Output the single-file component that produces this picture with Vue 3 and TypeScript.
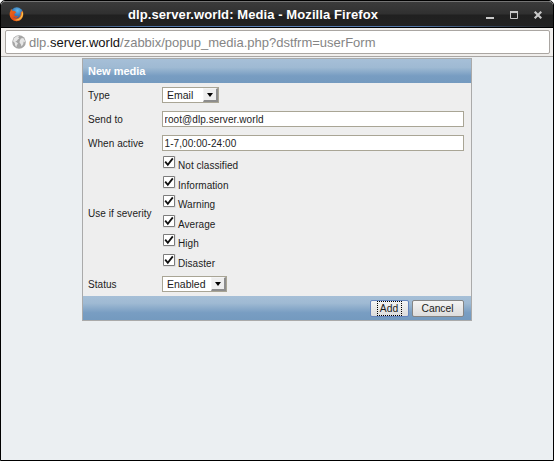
<script setup lang="ts">
import { ref } from 'vue'

const sendTo = ref('root@dlp.server.world')
const whenActive = ref('1-7,00:00-24:00')
const severities = ref([
  { name: 'Not classified', on: true },
  { name: 'Information', on: true },
  { name: 'Warning', on: true },
  { name: 'Average', on: true },
  { name: 'High', on: true },
  { name: 'Disaster', on: true },
])
</script>

<template>
  <div class="window">
    <header class="titlebar">
      <svg class="firefox" width="15" height="15" viewBox="0 0 16 16">
        <defs>
          <linearGradient id="fox" x1="0" y1="0" x2="1" y2="1">
            <stop offset="0" stop-color="#e8701c" />
            <stop offset=".55" stop-color="#e24a12" />
            <stop offset="1" stop-color="#f6a53b" />
          </linearGradient>
          <radialGradient id="globe" cx=".55" cy=".25" r=".7">
            <stop offset="0" stop-color="#62b7e8" />
            <stop offset="1" stop-color="#174a91" />
          </radialGradient>
        </defs>
        <circle cx="8.3" cy="7.2" r="6.8" fill="url(#globe)" />
        <path d="M2.2 1.8 3.6 4 6 4.2 7.8 5.6 5.9 7.1 5.6 8.2C6.2 9.8 8 10.5 10 9.6 8.6 12 5.6 12 4.1 10.2 5.5 13 10.5 13.1 12 9.7 13 7.4 12.6 5.8 12.4 4.8L13.4 5.6 14.4 3.7C16 7 15.4 10.3 13.3 12.8 10.5 16 5.5 15.7 2.8 13 .3 10.5.1 6.5 1.6 3.9Z" fill="url(#fox)" />
        <path d="M14.4 4.2C15.6 7.4 14.7 10 12.9 12 11 14 8 14.6 5.6 13.7 9 14 12.4 12.4 13.3 9.4 13.8 7.6 13.7 6 13.3 4.8L14.2 6Z" fill="#f9d04c" />
      </svg>
      <span class="title">dlp.server.world: Media - Mozilla Firefox</span>
      <svg class="controls" width="56" height="8" viewBox="0 0 56 8">
        <path d="M0 7h8" stroke="#c8c8c8" stroke-width="2" />
        <path d="M24.5 1h7v6.5h-7z" fill="none" stroke="#c8c8c8" />
        <path d="M24 1h8" stroke="#c8c8c8" stroke-width="2" />
        <path d="m48.7.7 6.6 6.6m0-6.6-6.6 6.6" stroke="#c8c8c8" stroke-width="2.1" />
      </svg>
    </header>

    <div class="toolbar">
      <div class="urlbar">
        <svg class="globe" width="14" height="14" viewBox="0 0 14 14">
          <circle cx="7" cy="7" r="6.8" fill="#a5a5a5" />
          <path d="M2 3.2 4.6 1.3 7.2 1 6.2 2.4 7.3 3.3 5.8 4.6 4.7 6 3.2 6.2 4.6 7.2 6 8.6 4.8 10.2 4.3 12.3 3 10 2.8 8 1 6.2ZM8.8 3.4 11.2 3 12.8 5.4 12.9 7.4 11.6 6.6 11.3 9 9.6 11.5 8.8 9.2 7.4 7.3 8 5.3Z" fill="#e6e6e6" />
        </svg>
        <span class="url">dlp.<b>server.world</b>/zabbix/popup_media.php?dstfrm=userForm</span>
      </div>
    </div>

    <main class="page">
      <form class="panel" @submit.prevent>
        <h1 class="heading">New media</h1>
        <div class="fields">
          <div class="row">
            <span class="label">Type</span>
            <div class="select email"><span>Email</span><i class="drop"></i></div>
          </div>
          <div class="row">
            <span class="label">Send to</span>
            <input v-model="sendTo" class="text" type="text" />
          </div>
          <div class="row">
            <span class="label">When active</span>
            <input v-model="whenActive" class="text" type="text" />
          </div>
          <div class="row severity">
            <span class="label">Use if severity</span>
            <div class="checks">
              <label v-for="s in severities" :key="s.name" class="check">
                <input v-model="s.on" class="native" type="checkbox" />
                <svg class="box" width="13" height="13" viewBox="0 0 13 13">
                  <path d="M.5.5h11v11H.5z" fill="#fff" stroke="#7c7c7c" />
                  <path d="M0 12.5h12.5V0" fill="none" stroke="#e0e0e0" />
                  <path v-if="s.on" d="m2.2 5.6 2.6 3.2 5-6.4" fill="none" stroke="#111" stroke-width="1.8" />
                </svg>
                <span class="name">{{ s.name }}</span>
              </label>
            </div>
          </div>
          <div class="row">
            <span class="label">Status</span>
            <div class="select status"><span>Enabled</span><i class="drop"></i></div>
          </div>
        </div>
        <footer class="actions">
          <button class="btn add" type="submit"><span>Add</span></button>
          <button class="btn cancel" type="button">Cancel</button>
        </footer>
      </form>
    </main>
  </div>
</template>

<style>
body {
  background: #fff;
}
</style>

<style scoped>
* {
  box-sizing: border-box;
}
.window {
  display: flex;
  flex-direction: column;
  width: 554px;
  height: 461px;
  overflow: hidden;
  border: 1px solid #000;
  border-radius: 5px 5px 0 0;
  background: #ebeff2;
  font: 10px/12px "Liberation Sans", Arial, sans-serif;
  color: #1c1c1c;
}
.titlebar {
  display: grid;
  grid-template-columns: 60px 1fr 60px;
  align-items: center;
  flex: none;
  height: 27px;
  padding: 0 11px 0 8px;
  border-top: 1px solid #747474;
  border-bottom: 1px solid #000;
  border-radius: 4px 4px 0 0;
  background: linear-gradient(90deg, #222, #5276a8 25%, #5d82b8 50%, #5276a8 75%, #222) 0 100% / 100% 1px no-repeat,
    linear-gradient(#3b3b3b, #303030 48%, #202020 52%, #222);
}
.title {
  justify-self: center;
  margin-right: 45px;
  white-space: nowrap;
  font-size: 13px;
  line-height: 16px;
  font-weight: bold;
  letter-spacing: 0.09px;
  color: #fff;
}
.controls {
  justify-self: end;
  margin-top: 1px;
}
.toolbar {
  flex: none;
  height: 29px;
  padding: 2px 3px 0 4px;
  border-bottom: 1px solid #aaa6a3;
  background: #f0eeec;
}
.urlbar {
  display: flex;
  align-items: center;
  height: 24px;
  padding-left: 6px;
  border: 1px solid #aaa6a2;
  border-radius: 2px;
  background: #fff;
}
.url {
  margin: 2px 0 0 3px;
  white-space: nowrap;
  font-size: 13px;
  line-height: 16px;
  color: #858585;
}
.url b {
  font-weight: normal;
  color: #111;
}
.page {
  display: flex;
  flex: 1;
  justify-content: center;
  align-items: flex-start;
  padding: 1px 1px 0 0;
}
.panel {
  width: 390px;
  height: 263px;
  border: 1px solid #aaa;
  background: #eee;
}
.heading {
  height: 24px;
  margin: 0;
  padding: 0 5.5px;
  background: linear-gradient(#a6bfd7, #9fbad3 35%, #789dc2 70%, #749abf);
  color: #fff;
  font-size: 11px;
  line-height: 25px;
  font-weight: bold;
}
.fields {
  height: 213px;
}
.row {
  display: flex;
  align-items: center;
  height: 24px;
  padding-left: 5px;
}
.label {
  width: 74px;
  padding: 2px 0 0 0.5px;
  white-space: nowrap;
  letter-spacing: 0.05px;
}
.severity .label {
  padding-top: 0;
}
.text {
  width: 302px;
  height: 16px;
  margin: 0;
  padding: 1px 2px 0;
  border: 1px solid #a9a595;
  outline: none;
  background: #fff;
  font: inherit;
  letter-spacing: 0.08px;
  color: inherit;
}
.select {
  display: flex;
  justify-content: space-between;
  height: 16px;
  padding-left: 4.5px;
  border: 1px solid #a9a595;
  background: #fff;
  font-size: 10.5px;
  line-height: 14px;
}
.email {
  width: 57px;
}
.status {
  width: 65px;
}
.drop {
  display: flex;
  justify-content: center;
  align-items: center;
  width: 15px;
  height: 14px;
  border: 1px solid #f4f4f4;
  border-right: 2px solid #8d8d8d;
  border-bottom: 2px solid #8d8d8d;
  background: #eee;
}
.drop::before {
  content: "";
  border: 3.5px solid transparent;
  border-top: 4px solid #000;
  border-bottom: 0;
}
.severity {
  height: 117px;
}
.checks {
  display: flex;
  flex-direction: column;
}
.check {
  display: flex;
  height: 19.5px;
  padding: 1px 0 0 1px;
}
.native {
  position: absolute;
  opacity: 0;
}
.name {
  margin: 4px 0 0 2.5px;
  letter-spacing: 0.05px;
}
.actions {
  display: flex;
  justify-content: flex-end;
  align-items: flex-start;
  gap: 3px;
  height: 24px;
  padding: 4px 7px 0 0;
  background: linear-gradient(#a6bfd7, #9fbad3 30%, #789dc2 70%, #749abf);
}
.btn {
  display: flex;
  justify-content: center;
  align-items: center;
  height: 17px;
  margin: 0;
  padding: 0;
  border: 1px solid #858585;
  border-radius: 2px;
  background: linear-gradient(#f4f4f4, #dcdcdc);
  font: inherit;
  font-size: 10.3px;
  color: inherit;
}
.add {
  width: 39px;
  border-color: #6685bd;
}
.add span {
  width: 25px;
  height: 15px;
  border: 1px dotted #000;
  line-height: 13px;
}
.cancel {
  width: 52px;
}
</style>
